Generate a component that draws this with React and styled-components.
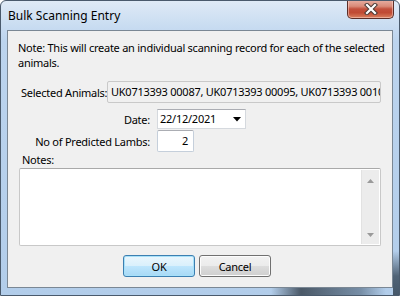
import styled, { createGlobalStyle } from "styled-components";

const Global = createGlobalStyle`
  html, body { margin: 0; padding: 0; background: #ffffff; }
  * { box-sizing: border-box; }
`;

export default function App() {
  return (
    <>
      <Global />
      <Window>
        <TitleBar>
          <Title>Bulk Scanning Entry</Title>
          <CloseButton>
            <svg width="14" height="12" viewBox="0 0 14 12">
              <path d="M3 2 L11 10 M11 2 L3 10" stroke="#4a3a36" strokeWidth="4.2" strokeLinecap="square" />
              <path d="M3 2 L11 10 M11 2 L3 10" stroke="#ffffff" strokeWidth="2.2" strokeLinecap="square" />
            </svg>
          </CloseButton>
        </TitleBar>
        <Client>
          <Note>
            Note: This will create an individual scanning record for each of the selected animals.
          </Note>
          <AnimalsRow>
            <Label>Selected Animals:</Label>
            <ReadOnlyBox>UK0713393 00087, UK0713393 00095, UK0713393 00103</ReadOnlyBox>
          </AnimalsRow>
          <FieldGrid>
            <RightLabel>Date:</RightLabel>
            <DateBox>
              <span>22/12/2021</span>
              <svg width="8" height="5" viewBox="0 0 8 5">
                <path d="M0 0 H8 L4 4.5 Z" fill="#000" />
              </svg>
            </DateBox>
            <RightLabel>No of Predicted Lambs:</RightLabel>
            <NumberBox>2</NumberBox>
          </FieldGrid>
          <NotesLabel>Notes:</NotesLabel>
          <NotesBox>
            <NotesText />
            <ScrollBar>
              <svg width="7" height="4" viewBox="0 0 7 4">
                <path d="M0 4 L3.5 0 L7 4 Z" fill="#9a9a9a" />
              </svg>
              <svg width="7" height="4" viewBox="0 0 7 4">
                <path d="M0 0 H7 L3.5 4 Z" fill="#9a9a9a" />
              </svg>
            </ScrollBar>
          </NotesBox>
          <ButtonRow>
            <Button $primary>OK</Button>
            <Button>Cancel</Button>
          </ButtonRow>
        </Client>
      </Window>
    </>
  );
}

const Window = styled.div`
  width: 400px;
  height: 296px;
  display: flex;
  flex-direction: column;
  padding: 0 6px 7px 6px;
  border: 1px solid #4a5a6c;
  border-radius: 6px 6px 0 0;
  background:
    linear-gradient(90deg, transparent 270px, rgba(40, 50, 60, 0.75) 300px, rgba(60, 80, 100, 0.5) 360px, transparent 385px) bottom / 100% 7px no-repeat,
    linear-gradient(180deg, transparent 250px, rgba(40, 55, 70, 0.7) 275px, rgba(40, 55, 70, 0.8) 296px) right / 6px 100% no-repeat,
    linear-gradient(180deg, #dfeaf6 0px, #cddff2 20px, #bcd4ee 40px, #b2cdea 100%);
  font-family: "Noto Sans", "Open Sans", sans-serif;
  font-size: 11px;
  letter-spacing: -0.25px;
  color: #000;
  overflow: hidden;
`;

const TitleBar = styled.div`
  height: 29px;
  display: flex;
  justify-content: space-between;
  align-items: flex-start;
`;

const Title = styled.div`
  padding: 7px 0 0 1px;
  font-size: 12px;
  letter-spacing: 0;
  line-height: 15px;
  color: #000;
`;

const CloseButton = styled.div`
  width: 47px;
  height: 19px;
  margin-top: -1px;
  margin-right: -1px;
  display: flex;
  align-items: center;
  justify-content: center;
  border: 1px solid #5b2e28;
  border-top: none;
  border-radius: 0 0 5px 5px;
  background: linear-gradient(180deg, #e8b0a4 0%, #d98a78 35%, #c2503c 50%, #c04a33 70%, #d9805e 100%);
  box-shadow: inset 0 0 0 1px rgba(255, 220, 210, 0.5);
`;

const Client = styled.div`
  flex: 1;
  background: #f0f0f0;
  border: 1px solid #7a8794;
  padding: 9px 10px 0 10px;
  display: flex;
  flex-direction: column;
`;

const Note = styled.div`
  line-height: 15px;
  width: 372px;
`;

const AnimalsRow = styled.div`
  margin-top: 11px;
  display: grid;
  grid-template-columns: 89px 274px;
  align-items: center;
`;

const Label = styled.div`
  padding-left: 3px;
  white-space: nowrap;
`;

const ReadOnlyBox = styled.div`
  height: 22px;
  padding: 0 3px;
  border: 1px solid #c9c9c9;
  border-radius: 2px;
  background: #f0f0f0;
  line-height: 20px;
  white-space: nowrap;
  overflow: hidden;
`;

const FieldGrid = styled.div`
  margin-top: 6px;
  display: grid;
  grid-template-columns: 132px auto;
  column-gap: 7px;
  row-gap: 1px;
  align-items: center;
  justify-items: start;
`;

const RightLabel = styled.div`
  justify-self: end;
  white-space: nowrap;
`;

const DateBox = styled.div`
  width: 89px;
  height: 20px;
  padding: 0 4px 0 2px;
  display: flex;
  align-items: center;
  justify-content: space-between;
  background: #fff;
  border: 1px solid #d5d9de;
  border-top-color: #abadb3;
  line-height: 18px;
`;

const NumberBox = styled.div`
  width: 37px;
  height: 22px;
  padding: 0 5px;
  text-align: right;
  background: #fff;
  border: 1px solid #c5cfdb;
  border-top-color: #abadb3;
  border-radius: 2px;
  line-height: 20px;
`;

const NotesLabel = styled.div`
  padding-left: 4px;
  line-height: 16px;
`;

const NotesBox = styled.div`
  margin-left: 1px;
  width: 362px;
  height: 78px;
  display: flex;
  background: #fff;
  border: 1px solid #c8c8c8;
  border-top-color: #a9a9a9;
  border-radius: 2px;
`;

const NotesText = styled.div`
  flex: 1;
`;

const ScrollBar = styled.div`
  width: 18px;
  margin: 1px;
  display: flex;
  flex-direction: column;
  align-items: center;
  justify-content: space-between;
  padding: 9px 0 7px 0;
  background: #ececec;
  border-left: 1px solid #e2e2e2;
`;

const ButtonRow = styled.div`
  margin-top: 9px;
  display: flex;
  justify-content: center;
  gap: 4px;
  padding-right: 6px;
`;

const Button = styled.div`
  width: 72px;
  height: 22px;
  display: flex;
  align-items: center;
  justify-content: center;
  border-radius: 3px;
  border: 1px solid ${(p) => (p.$primary ? "#3c7fb1" : "#707070")};
  background: ${(p) =>
    p.$primary
      ? "linear-gradient(180deg, #eaf6fd 0%, #d9f0fc 50%, #bee6fd 50%, #a7d9f5 100%)"
      : "linear-gradient(180deg, #f2f2f2 0%, #ebebeb 50%, #dddddd 50%, #cfcfcf 100%)"};
  box-shadow: inset 0 0 0 1px ${(p) => (p.$primary ? "#a8e1f9" : "#fcfcfc")};
`;
